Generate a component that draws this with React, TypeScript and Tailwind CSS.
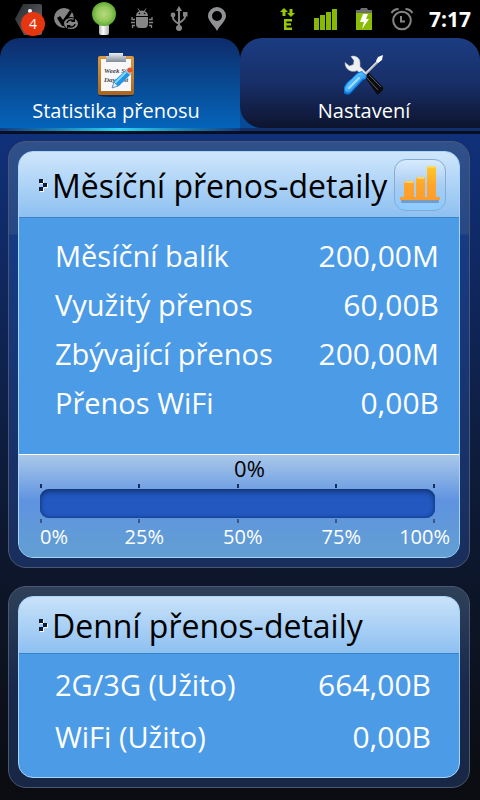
import React from "react";

const HexBadge = () => (
  <svg width="32" height="34" viewBox="0 0 32 34" aria-hidden="true">
    <defs>
      <linearGradient id="hex" x1="0" y1="0" x2="1" y2="1">
        <stop offset="0" stopColor="#26292d" />
        <stop offset="1" stopColor="#6a6c70" />
      </linearGradient>
    </defs>
    <path d="M10 2h17a2 2 0 0 1 2 2v27a2 2 0 0 1-2 2H11L2 17z" fill="url(#hex)" />
    <circle cx="17" cy="9" r="2" fill="#fff" />
    <circle cx="20" cy="22" r="12" fill="#e6360f" />
    <text x="20" y="27" textAnchor="middle" fontSize="14" fill="#fff">4</text>
  </svg>
);

const CheckSync = () => (
  <svg width="26" height="24" viewBox="0 0 26 24" aria-hidden="true">
    <circle cx="11" cy="11" r="10" fill="#858585" />
    <path d="M4 11l3-2 3 4 7-10 2 2-8 14H9z" fill="#000" />
    <ellipse cx="18" cy="16.500" rx="8" ry="6.500" fill="#000" />
    <ellipse cx="18" cy="16.500" rx="7" ry="5.500" fill="#858585" />
    <path d="M14 16a4 3.500 0 0 1 6-2.500M22 17a4 3.500 0 0 1-6 2.500" stroke="#000" strokeWidth="1.500" fill="none" />
    <path d="M18 15h4v-4zM18 18h-4v4z" fill="#000" />
  </svg>
);

const Bulb = () => (
  <svg width="26" height="34" viewBox="0 0 26 34" aria-hidden="true">
    <defs>
      <radialGradient id="bulb">
        <stop offset="0" stopColor="#b9d87c" />
        <stop offset="0.6" stopColor="#92c95c" />
        <stop offset="1" stopColor="#5faa2f" />
      </radialGradient>
      <linearGradient id="stem">
        <stop offset="0" stopColor="#aab0b0" />
        <stop offset="0.4" stopColor="#fff" />
        <stop offset="1" stopColor="#aab0b0" />
      </linearGradient>
    </defs>
    <rect x="8" y="22" width="10" height="11" rx="2" fill="url(#stem)" />
    <circle cx="13" cy="12" r="12" fill="url(#bulb)" />
  </svg>
);

const DebugAndroid = () => (
  <svg width="22" height="22" viewBox="0 0 22 22" fill="#858585" aria-hidden="true">
    <path d="M5 8a6 5.500 0 0 1 12 0z" />
    <path d="M7 0.500l2 3M15 0.500l-2 3" stroke="#858585" strokeWidth="1" />
    <circle cx="8.500" cy="5.500" r="0.800" fill="#000" />
    <circle cx="13.500" cy="5.500" r="0.800" fill="#000" />
    <path d="M5 9h12v7a4 4 0 0 1-4 4H9a4 4 0 0 1-4-4z" />
    <path d="M4 11.500H1V9M4 14.500H0M4 17.500H1.500V20M18 11.500h3V9M18 14.500h4M18 17.500h2.500V20" stroke="#858585" strokeWidth="1.300" fill="none" />
  </svg>
);

const Usb = () => (
  <svg width="18" height="26" viewBox="0 0 18 26" fill="#858585" aria-hidden="true">
    <path d="M9 4v18M3 9v3q0 2 3 4l3 2M15 9v2q0 2-3 4l-3 2" stroke="#858585" strokeWidth="2" fill="none" />
    <path d="M9 0l3 5H6z" />
    <circle cx="3" cy="9" r="2.400" />
    <rect x="13" y="6" width="4.500" height="4.500" />
    <circle cx="9" cy="22" r="3" />
  </svg>
);

const Pin = () => (
  <svg width="20" height="26" viewBox="0 0 20 26" aria-hidden="true">
    <path
      fillRule="evenodd"
      fill="#8f9194"
      d="M10 1a9 9 0 0 1 9 9c0 5-6 9-9 15C7 19 1 15 1 10a9 9 0 0 1 9-9zM10 5a5 5 0 1 0 0 10a5 5 0 1 0 0-10z"
    />
  </svg>
);

const EdgeData = () => (
  <svg width="16" height="24" viewBox="0 0 16 24" fill="#97c900" aria-hidden="true">
    <path d="M4 1l4 4H5.500v4h-3V5H0zM9.500 2h3v4H15l-4 4-4-4h2.500z" />
    <path d="M4 12h8v2.400H6.500v1.800H11v2.300H6.500v2.100H12V23H4z" />
  </svg>
);

const Signal = () => (
  <svg width="24" height="24" viewBox="0 0 24 24" fill="#86b804" aria-hidden="true">
    <rect x="0" y="11" width="5" height="12" />
    <rect x="6" y="8" width="5" height="15" />
    <rect x="12" y="5" width="5" height="18" />
    <rect x="18" y="2" width="5" height="21" />
  </svg>
);

const Battery = () => (
  <svg width="18" height="24" viewBox="0 0 18 24" aria-hidden="true">
    <path d="M1 3h4l1-2h6l1 2h4v3H1z" fill="#6e6e6e" />
    <rect x="1" y="6" width="16" height="17" fill="#8bbd08" />
    <path d="M8 7h5l-2 5h3l-7 10 2-7H5z" fill="#fff" />
  </svg>
);

const Alarm = () => (
  <svg width="24" height="24" viewBox="0 0 24 24" fill="none" stroke="#858585" strokeWidth="2" aria-hidden="true">
    <circle cx="12" cy="13.500" r="8.800" />
    <path d="M11 9v5.500h4" />
    <path d="M1.500 6Q4 2 8.500 2M22.500 6Q20 2 15.500 2" />
  </svg>
);

const Clipboard = () => (
  <svg width="38" height="44" viewBox="0 0 38 44" aria-hidden="true">
    <defs>
      <linearGradient id="board" x1="0" y1="0" x2="0" y2="1">
        <stop offset="0" stopColor="#dc9a42" />
        <stop offset="1" stopColor="#a9651d" />
      </linearGradient>
      <linearGradient id="clip" x1="0" y1="0" x2="0" y2="1">
        <stop offset="0" stopColor="#eceff2" />
        <stop offset="1" stopColor="#7f8b98" />
      </linearGradient>
    </defs>
    <ellipse cx="19" cy="42" rx="18" ry="2" fill="#082a5c" />
    <rect x="1" y="3" width="36" height="39" rx="2" fill="url(#board)" />
    <rect x="4" y="6" width="30" height="32" fill="#f8f8fa" />
    <path d="M12 3V0h14v3h3v6H9V3z" fill="url(#clip)" />
    <g fontSize="7" fontStyle="italic" fontWeight="bold" fill="#454545" fontFamily="Liberation Serif, serif">
      <text x="7" y="20">Week St</text>
      <text x="7" y="29">Day List</text>
    </g>
    <path d="M29 17l5 4-12 12-7 2 2-7z" fill="#2196e6" />
    <path d="M29 19L18 30" stroke="#80d6ff" strokeWidth="2" />
    <path d="M17 29l-2 6 6-2z" fill="#dceaf5" stroke="#376d9e" strokeWidth="0.600" />
    <path d="M28 18l3-3 4 4-2 3z" fill="#b8c2cc" />
    <circle cx="33" cy="17" r="2.600" fill="#e4532c" />
  </svg>
);

const Tools = () => (
  <svg width="40" height="42" viewBox="0 0 40 42" aria-hidden="true">
    <defs>
      <linearGradient id="handle" x1="0" y1="0" x2="1" y2="1">
        <stop offset="0" stopColor="#1387e8" />
        <stop offset="0.4" stopColor="#53bcff" />
        <stop offset="1" stopColor="#0b6fd0" />
      </linearGradient>
    </defs>
    <path d="M20 21l4-4 15 15q1 2-1 4l-3 3q-2 1-3-1z" fill="#0c0c10" />
    <path d="M25 20l12 12M23 23l11 12" stroke="#5c5c60" strokeWidth="1" />
    <path
      d="M7 1.500c4-1.500 9 1.500 9 6v4l7 7-3 3-7-6c-5 2.500-12-.5-12-8l4.500 3.500 4-1.500.5-4z"
      fill="#eff0f2"
      stroke="#b9bdc3"
      strokeWidth="0.600"
    />
    <path d="M21 19.500L34 6.500" stroke="#b4b8be" strokeWidth="2.400" />
    <path d="M21 18.500L34 5.500" stroke="#f2f3f5" strokeWidth="1" />
    <path d="M32 6l2-4 5-2-1 5-4 3z" fill="#fff" />
    <path d="M15 17l3-1 5 5-1 3-3 1-12 13c-4 4-10 0-7-6 2-4 4-6 7-8s5-6 8-7z" fill="#0a79e0" />
    <path d="M15 18l3-1 4 4-1 2-3 1L7 36c-4 3-8 0-5-5 2-4 4-5 6-7s4-5 7-6z" fill="url(#handle)" />
    <path d="M15 23L5 33" stroke="#a8dfff" strokeWidth="2" strokeLinecap="round" />
  </svg>
);

const Chart = () => (
  <svg width="42" height="38" viewBox="0 0 42 38" aria-hidden="true">
    <defs>
      <linearGradient id="bars" x1="0" y1="0" x2="0" y2="1">
        <stop offset="0" stopColor="#ffc928" />
        <stop offset="0.6" stopColor="#ffa32a" />
        <stop offset="1" stopColor="#ff9d2c" />
      </linearGradient>
    </defs>
    <rect x="2" y="34" width="38" height="3" rx="1" fill="#6589b2" opacity="0.700" />
    <path d="M5 31V17q0-2 2-2h6q2 0 2 2v14h2V13q0-2 2-2h5q2 0 2 2v18h2V2q0-2 2-2h5q2 0 2 2v29h4v3H1v-3z" fill="url(#bars)" />
    <path d="M6 16h8M18 12h7M29 1h7" stroke="#ffde6b" strokeWidth="1.500" />
  </svg>
);

const Bullet = () => (
  <svg width="10" height="14" viewBox="0 0 10 14" className="shrink-0" aria-hidden="true">
    <path d="M1 1h4v4h4v4H5v4H1V9h4V5H1z" fill="#fff" />
    <path d="M0 0h4v4H0zM4 4h4v4H4zM0 8h4v4H0z" fill="#0b1c3c" />
  </svg>
);

const Shell = ({ className, children }: { className: string; children: React.ReactNode }) => (
  <section className={"rounded-[18px] border border-[#4b5875] p-[9px] " + className}>
    <div className="overflow-hidden rounded-[15px] border border-[#a6d6fa] bg-[#4c9be6]">{children}</div>
  </section>
);

const Row = ({ label, value }: { label: string; value: string }) => (
  <div className="flex justify-between">
    <dt className="text-[29px]">{label}</dt>
    <dd className="text-[30px]">{value}</dd>
  </div>
);

const marks = [0, 25, 50, 75, 100];

const Ticks = ({ color }: { color: string }) => (
  <div className="flex justify-between" aria-hidden="true">
    {marks.map((m) => (
      <span key={m} className={"h-1 w-[2px] " + color} />
    ))}
  </div>
);

export default function App() {
  return (
    <div className="min-h-screen bg-black font-['Open_Sans','Noto_Sans',sans-serif] text-white">
      <header className="flex h-[38px] items-center justify-between pr-[9px] pl-[10px]">
        <div className="grid w-[226px] grid-cols-6 place-items-center">
          <HexBadge />
          <CheckSync />
          <Bulb />
          <DebugAndroid />
          <Usb />
          <Pin />
        </div>
        <div className="flex items-center gap-2">
          <div className="grid w-[152px] grid-cols-4 place-items-center">
            <EdgeData />
            <Signal />
            <Battery />
            <Alarm />
          </div>
          <time className="text-[21px] leading-6 font-bold">7:17</time>
        </div>
      </header>

      <nav className="grid grid-cols-2">
        <button
          type="button"
          className="flex h-[90px] flex-col items-center justify-end rounded-t-[20px] bg-linear-to-b from-[#0d2c6b] via-[#084992] to-[#0464bb] pr-2 pb-[3px] text-[20px] leading-[28px]"
        >
          <Clipboard />
          <span>Statistika přenosu</span>
        </button>
        <div className="bg-linear-to-b from-black from-50% to-[#074a98] to-50%">
          <button
            type="button"
            className="flex h-[90px] w-full flex-col items-center justify-end rounded-t-[22px] rounded-bl-[22px] bg-linear-to-b from-[#1b3c82] via-[#182f68] to-[#0d142f] pb-[3px] pl-2 text-[20px] leading-[28px]"
          >
            <Tools />
            <span>Nastavení</span>
          </button>
        </div>
      </nav>
      <div className="grid h-[6px] grid-cols-2 border-b-[3px] border-[#0a0f20] bg-[#122f70]">
        <div className="bg-linear-to-r from-[#123d80] via-[#2cd5f6] to-[#123d80]" />
      </div>

      <main className="flex min-h-[666px] flex-col gap-[18px] bg-linear-to-b from-[#10307a] via-[#0d1830] via-60% to-[#0b0c10] px-2 pt-[7px] pr-[10px] pb-3">
        <Shell className="bg-[linear-gradient(to_bottom,#30508a,#274884_92px,#163b84_93px,#192e5b)]">
          <div className="flex h-[66px] items-center justify-between border-b border-[#3b83c8] bg-linear-to-b from-[#cfe6fb] to-[#8dc0f1] pr-[13px] pl-5">
            <h1 className="flex items-center gap-[3px] pt-[2px] text-[32px] leading-[46px] whitespace-nowrap text-black">
              <Bullet />
              Měsíční přenos-detaily
            </h1>
            <button
              type="button"
              aria-label="Graf"
              className="flex h-[52px] w-[52px] shrink-0 items-center justify-center rounded-xl border border-[#84acd3] bg-linear-to-b from-[#d8ebfd] via-[#a9cdf3] to-[#8bcbff]"
            >
              <Chart />
            </button>
          </div>
          <dl className="h-[236px] pt-[13px] pr-5 pl-9 leading-[49px]">
            <Row label="Měsíční balík" value="200,00M" />
            <Row label="Využitý přenos" value="60,00B" />
            <Row label="Zbývající přenos" value="200,00M" />
            <Row label="Přenos WiFi" value="0,00B" />
          </dl>
          <div className="h-[103px] border-t border-white bg-linear-to-b from-[#a9c8e9] via-[#5f93e0] via-45% to-[#629fd2] pl-[21px]">
            <p className="pb-[3px] text-center text-[22px] leading-[26px] text-black">0%</p>
            <div className="pr-6">
              <Ticks color="bg-[#15305f]" />
              <div
                role="progressbar"
                aria-label="Měsíční přenos"
                aria-valuenow={0}
                className="my-px h-[29px] rounded-[9px] bg-[#2258bf] shadow-[inset_0_3px_5px_#143678,inset_0_-1px_3px_#173f8b]"
              />
              <Ticks color="bg-[#3b5685]" />
            </div>
            <div className="grid grid-cols-[85fr_99fr_99fr_78fr_50fr] pr-[9px] text-[20px] leading-[28px]">
              {marks.map((m) => (
                <span key={m}>{m}%</span>
              ))}
            </div>
          </div>
        </Shell>

        <Shell className="bg-linear-to-b from-[#2f4058] via-[#18294c] to-[#182744]">
          <h2 className="flex h-[57px] items-center gap-[3px] border-b border-[#3b83c8] bg-linear-to-b from-[#c9e2f9] to-[#8dc0f1] pt-[2px] pl-5 text-[32px] leading-[46px] whitespace-nowrap text-black">
            <Bullet />
            Denní přenos-detaily
          </h2>
          <dl className="h-[123px] pt-[5px] pr-7 pl-9 leading-[52px]">
            <Row label="2G/3G (Užito)" value="664,00B" />
            <Row label="WiFi (Užito)" value="0,00B" />
          </dl>
        </Shell>
      </main>
    </div>
  );
}
